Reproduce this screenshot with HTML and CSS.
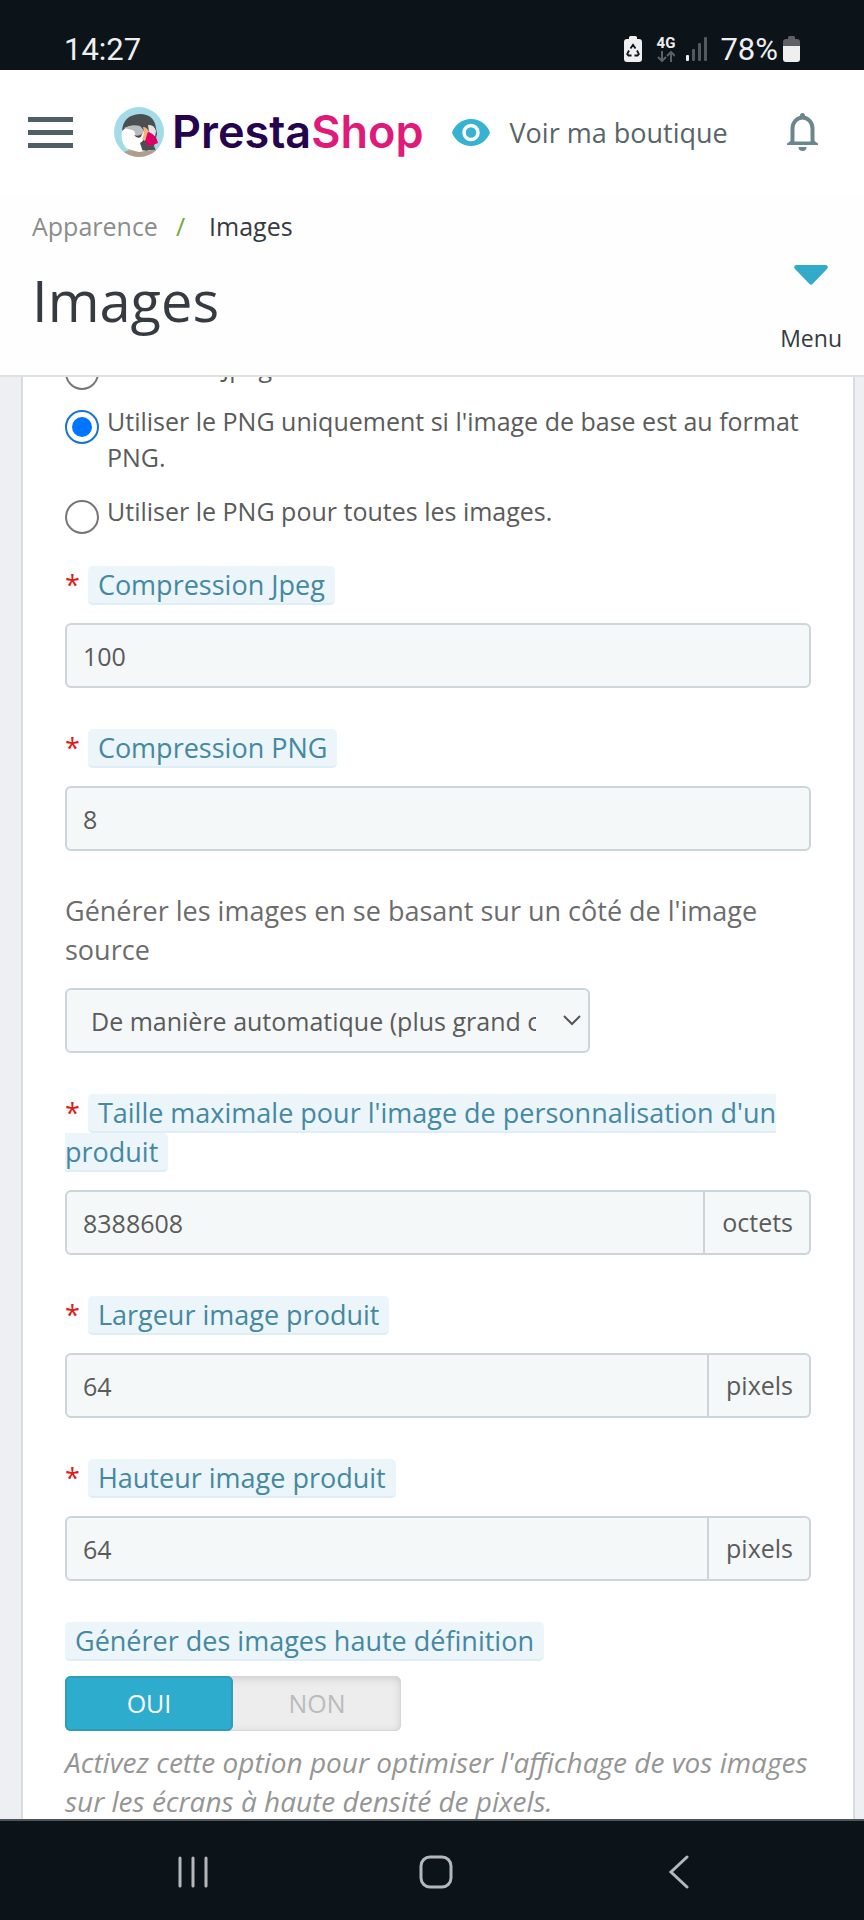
FILE: index.html
```html
<!DOCTYPE html>
<html lang="fr">
<head>
    <meta charset="UTF-8">
    <meta name="viewport" content="width=device-width, initial-scale=1.0">
    <title>Images - PrestaShop</title>
    <link rel="stylesheet" href="styles.css">
</head>
<body>

<div class="status-bar">
    <span>14:27</span>
    <div class="status-icons">
        <svg class="saver-icon" width="18" height="26" viewBox="0 0 18 26">
            <path d="M5 3V1.500Q5 0 6.500 0h5Q13 0 13 1.500V3h2q3 0 3 3v17q0 3-3 3H3q-3 0-3-3V6q0-3 3-3z" fill="#efeff0"/>
            <path d="M6.500 12.500 9 8.800l2.500 3.700M13 14.500l1.800 3.500-1.300 1.500H10.500M7.500 19.500H4.500L3.200 18 5 14.500" fill="none" stroke="#0c141a" stroke-width="1.800"/>
        </svg>
        <div class="network">
            <span>4G</span>
            <svg width="18" height="11" viewBox="0 0 18 11" fill="none" stroke="#5d6166" stroke-width="2">
                <path d="M5 0v10M1 6l4 4 4-4M14 11V1M10 5l4-4 4 4"/>
            </svg>
        </div>
        <svg class="signal-icon" width="23" height="24" viewBox="0 0 23 24">
            <rect x="1" y="18" width="3" height="6" rx="1" fill="#efeff0"/>
            <rect x="7" y="12" width="3" height="12" rx="1" fill="#54595e"/>
            <rect x="13" y="6" width="3" height="18" rx="1" fill="#54595e"/>
            <rect x="19" y="0" width="3" height="24" rx="1" fill="#54595e"/>
        </svg>
        <span>78%</span>
        <svg class="battery-icon" width="17" height="26" viewBox="0 0 17 26">
            <path d="M5 3V1.500Q5 0 6.500 0h4Q12 0 12 1.500V3h2q3 0 3 3v4H0V6q0-3 3-3z" fill="#5d6166"/>
            <path d="M0 10h17v13q0 3-3 3H3q-3 0-3-3z" fill="#efeff0"/>
        </svg>
    </div>
</div>

<header class="header">
    <button type="button" class="icon-btn" aria-label="Navigation">
        <svg width="45" height="31" viewBox="0 0 45 31" fill="#4e6066">
            <path d="M0 0h45v5H0zM0 13h45v5H0zM0 26h45v5H0z"/>
        </svg>
    </button>
    <a href="#" class="logo">
        <svg width="50" height="50" viewBox="0 0 50 50">
            <defs>
                <clipPath id="logo-clip"><circle cx="25" cy="25" r="25"/></clipPath>
            </defs>
            <g clip-path="url(#logo-clip)">
                <rect width="50" height="50" fill="#a4dbe8"/>
                <path d="M8 24Q9 8 26 7q14 0 16 14l1 6-4 16H15z" fill="#4b4f50"/>
                <path d="M8 24q6-6 13-5 9 1 10 9-1 6-5 8 2 6 3 9l-6 1-11-5Q6 34 8 24z" fill="#fff"/>
                <path d="M10 21q8-4 16-2 4 3 3 8-4 3-8 2 1-5-3-6-4-1-8-2z" fill="#b9bdc0"/>
                <path d="M20 28q4 2 8-1l-1 3q-4 2-7-2z" fill="#44484a"/>
                <path d="M34 18q6-1 8 6l-1 6-6-5z" fill="#e2e3e5"/>
                <path d="M29 20q4 0 6 5l-4 9-3-2q3-5 1-12z" fill="#f0b37a"/>
                <path d="M34 25q9 3 10 11-6 3-12 2-1-7 2-13z" fill="#df0067"/>
                <path d="M9 45l8-2 8 2 14-2 4 2-6 8H14z" fill="#b39d88"/>
                <path d="M28 43l3-3 3 4zM38 42l2-3 2 5z" fill="#4b4f50"/>
            </g>
        </svg>
        <span class="logo-text">Presta<span>Shop</span></span>
    </a>
    <a href="#" class="shop-link">
        <svg width="38" height="27" viewBox="0 0 38 27">
            <path d="M19 0C10 0 3 5.500 0 13.500 3 21.500 10 27 19 27s16-5.500 19-13.500C35 5.500 28 0 19 0z" fill="#36b3d0"/>
            <circle cx="19" cy="13.500" r="7" fill="#36b3d0" stroke="#fff" stroke-width="3.500"/>
        </svg>
        Voir ma boutique
    </a>
    <button type="button" class="icon-btn bell" aria-label="Notifications">
        <svg width="31" height="38" viewBox="0 0 31 38">
            <path d="M5.500 30V15.500a10 11 0 0 1 20 0V30" fill="none" stroke="#6c868e" stroke-width="4"/>
            <path d="M13 5V2.500a2.500 2.500 0 0 1 5 0V5zM5 27h21l5 3.500V32H0v-1.500z" fill="#6c868e"/>
            <path d="M7.500 26h16v2.500h-16z" fill="#fff"/>
            <path d="M11.500 34h8a4 4 0 0 1-8 0z" fill="#6c868e"/>
        </svg>
    </button>
</header>

<div class="page-head">
    <div>
        <nav class="breadcrumb">
            <a href="#">Apparence</a>
            <span class="separator">/</span>
            <span>Images</span>
        </nav>
        <h1>Images</h1>
    </div>
    <button type="button" class="menu-btn">
        <svg width="34" height="20" viewBox="0 0 34 20">
            <path d="M2 0h30q3 1 1 4L18.500 19q-1.500 1.500-3 0L1 4Q-1 1 2 0z" fill="#31aacb"/>
        </svg>
        Menu
    </button>
</div>

<main class="content">
    <form class="panel">
        <div class="radio-list">
            <label class="radio">
                <input type="radio" name="image_format" value="jpg">
                <span>Utiliser le Jpeg.</span>
            </label>
            <label class="radio">
                <input type="radio" name="image_format" value="png" checked>
                <span>Utiliser le PNG uniquement si l'image de base est au format PNG.</span>
            </label>
            <label class="radio">
                <input type="radio" name="image_format" value="png_all">
                <span>Utiliser le PNG pour toutes les images.</span>
            </label>
        </div>

        <div class="form-group">
            <label for="jpeg-quality" class="required"><span class="hint">Compression Jpeg</span></label>
            <input type="text" id="jpeg-quality" class="field" value="100">
        </div>

        <div class="form-group">
            <label for="png-quality" class="required"><span class="hint">Compression PNG</span></label>
            <input type="text" id="png-quality" class="field" value="8">
        </div>

        <div class="form-group">
            <label for="generation">Générer les images en se basant sur un côté de l'image source</label>
            <div class="select-wrap">
                <select id="generation" class="field">
                    <option>De manière automatique (plus grand côté)</option>
                    <option>Largeur</option>
                    <option>Hauteur</option>
                </select>
                <svg class="chevron" width="18" height="11" viewBox="0 0 18 11">
                    <path d="M1 1l8 8 8-8" fill="none" stroke="#555" stroke-width="2"/>
                </svg>
            </div>
        </div>

        <div class="form-group">
            <label for="max-size" class="required"><span class="hint">Taille maximale pour l'image de personnalisation d'un produit</span></label>
            <div class="input-group">
                <input type="text" id="max-size" class="field" value="8388608">
                <span class="addon">octets</span>
            </div>
        </div>

        <div class="form-group">
            <label for="picture-width" class="required"><span class="hint">Largeur image produit</span></label>
            <div class="input-group">
                <input type="text" id="picture-width" class="field" value="64">
                <span class="addon">pixels</span>
            </div>
        </div>

        <div class="form-group">
            <label for="picture-height" class="required"><span class="hint">Hauteur image produit</span></label>
            <div class="input-group">
                <input type="text" id="picture-height" class="field" value="64">
                <span class="addon">pixels</span>
            </div>
        </div>

        <fieldset class="switch-group">
            <legend><span class="hint">Générer des images haute définition</span></legend>
            <div class="switch">
                <input type="radio" name="high_dpi" id="high-dpi-on" checked>
                <label for="high-dpi-on">OUI</label>
                <input type="radio" name="high_dpi" id="high-dpi-off">
                <label for="high-dpi-off">NON</label>
            </div>
            <p class="help">Activez cette option pour optimiser l'affichage de vos images sur les écrans à haute densité de pixels.</p>
        </fieldset>
    </form>
</main>

<nav class="nav-bar">
    <button type="button" class="icon-btn" aria-label="Applications récentes">
        <svg width="34" height="34" viewBox="0 0 34 34" stroke="#b4b8bb" stroke-width="3" stroke-linecap="round">
            <path d="M4 3v28M17 3v28M30 3v28"/>
        </svg>
    </button>
    <button type="button" class="icon-btn" aria-label="Accueil">
        <svg width="34" height="34" viewBox="0 0 34 34">
            <rect x="2" y="2" width="30" height="30" rx="9" fill="none" stroke="#b4b8bb" stroke-width="3"/>
        </svg>
    </button>
    <button type="button" class="icon-btn" aria-label="Retour">
        <svg width="34" height="34" viewBox="0 0 34 34">
            <path d="M25 2L9 17l16 15" fill="none" stroke="#b4b8bb" stroke-width="3" stroke-linecap="round"/>
        </svg>
    </button>
</nav>

</body>
</html>
```
FILE: styles.css
```css
* {
    box-sizing: border-box;
}

body {
    margin: 0;
    height: 100vh;
    display: flex;
    flex-direction: column;
    font-family: "Open Sans", "Noto Sans", sans-serif;
    font-size: 25px;
    color: #5b5b5b;
    background-color: #eeeff2;
}

a {
    color: inherit;
    text-decoration: none;
}

svg {
    display: block;
    flex: none;
}

button {
    font: inherit;
    color: inherit;
    background: none;
    border: none;
    padding: 0;
    cursor: pointer;
}

/* Phone status bar */
.status-bar {
    flex: none;
    height: 70px;
    padding: 30px 64px 2px;
    display: flex;
    justify-content: space-between;
    align-items: center;
    background-color: #0c141a;
    color: #efeff0;
    font-family: Roboto, sans-serif;
    font-size: 31px;
}

.status-icons {
    display: flex;
    align-items: center;
}

.network {
    display: flex;
    flex-direction: column;
    align-items: center;
    margin: 0 10px 0 15px;
    font-size: 15px;
    font-weight: bold;
    line-height: 15px;
}

.signal-icon {
    margin-right: 12px;
}

.battery-icon {
    margin-left: 5px;
}

/* Header */
.header {
    flex: none;
    height: 124px;
    padding: 0 46px 0 28px;
    display: flex;
    align-items: center;
    background-color: #ffffff;
}

.logo {
    display: flex;
    align-items: center;
    gap: 8px;
    margin-left: 41px;
}

.logo-text {
    font-family: Inter, Lato, sans-serif;
    font-size: 45px;
    font-weight: 600;
    line-height: 50px;
    color: #25034d;
}

.logo-text span {
    color: #df1a7b;
}

.shop-link {
    display: flex;
    align-items: center;
    gap: 20px;
    margin-left: 28px;
    font-size: 27px;
    color: #576469;
}

.bell {
    margin-left: auto;
}

/* Page title */
.page-head {
    flex: none;
    padding: 14px 22px 21px 32px;
    display: flex;
    justify-content: space-between;
    align-items: flex-end;
    background-color: #fefefe;
    border-bottom: 2px solid #dfe1e3;
    color: #363a41;
}

.breadcrumb {
    display: flex;
    line-height: 36px;
}

.breadcrumb a {
    color: #8c8c8c;
}

.separator {
    margin: 0 24px 0 18px;
    color: #72a83c;
}

h1 {
    margin: 18px 0 16px;
    font-size: 56px;
    font-weight: normal;
    line-height: 76px;
}

.menu-btn {
    display: flex;
    flex-direction: column;
    align-items: center;
    gap: 37px;
    font-size: 23px;
    line-height: 32px;
}

/* Form */
.content {
    flex: 1;
    min-height: 0;
    overflow: hidden;
}

.panel {
    margin: -28px 9px 0 21px;
    padding: 0 42px 40px;
    background-color: #ffffff;
    border: 2px solid #d7dce0;
    border-top: none;
}

.radio-list {
    display: flex;
    flex-direction: column;
    gap: 18px;
    margin-bottom: 36px;
}

.radio {
    display: flex;
    align-items: flex-start;
    gap: 8px;
    line-height: 36px;
}

/* The negative margin keeps a one-line row as tall as its text */
.radio input {
    appearance: none;
    flex: none;
    width: 34px;
    height: 34px;
    margin: 7px 0 -5px;
    border: 2px solid #767676;
    border-radius: 50%;
}

.radio input:checked {
    border-color: #1a73d4;
    background-color: #0075ff;
    background-clip: content-box;
    padding: 5px;
}

.form-group {
    display: flex;
    flex-direction: column;
    gap: 19px;
    margin-bottom: 40px;
}

.form-group label,
.switch-group legend {
    font-size: 27px;
    line-height: 39px;
    color: #6c6c6c;
}

.required::before {
    content: "*";
    margin-right: 8px;
    color: #dd1a1a;
}

.hint {
    padding: 0 10px;
    background-color: #ebf5fa;
    border-bottom: 2px solid #dfeef5;
    border-radius: 5px;
    color: #4588a0;
}

.field {
    width: 100%;
    height: 65px;
    padding: 0 16px;
    border: 2px solid #cbd5da;
    border-radius: 6px;
    background-color: #f4f8f9;
    color: #5b5b5b;
    font-family: inherit;
    font-size: 25px;
}

.select-wrap {
    position: relative;
    width: 525px;
    max-width: 100%;
}

select.field {
    display: block;
    appearance: none;
    padding: 0 52px 0 24px;
}

.chevron {
    position: absolute;
    top: 27px;
    right: 9px;
    pointer-events: none;
}

.input-group {
    display: flex;
}

.input-group .field {
    flex: 1;
    min-width: 0;
    border-radius: 6px 0 0 6px;
}

.addon {
    padding: 0 16px 0 17px;
    border: 2px solid #cbd5da;
    border-left: none;
    border-radius: 0 6px 6px 0;
    background-color: #f4f8f9;
    line-height: 61px;
}

/* Yes / no switch */
.switch-group {
    margin: 0;
    padding: 0;
    border: none;
}

.switch-group legend {
    padding: 0;
}

.switch {
    position: relative;
    display: flex;
    width: 336px;
    margin-top: 16px;
    border-radius: 6px;
    background-color: #ededed;
    box-shadow: inset 0 0 0 1px #d6d6d6, inset 0 2px 8px #c8c8c8;
    line-height: 55px;
    text-align: center;
}

.switch input {
    position: absolute;
    opacity: 0;
}

.switch label {
    flex: 1;
    color: #bbbbbb;
}

.switch input:checked + label {
    border-radius: 6px;
    background-color: #2eacce;
    box-shadow: inset 0 0 0 2px #2e9dba;
    color: #ffffff;
}

.help {
    margin: 12px 0 0;
    font-size: 28px;
    font-style: italic;
    line-height: 39px;
    color: #959595;
}

/* Phone navigation bar */
.nav-bar {
    flex: none;
    height: 101px;
    padding: 3px 168px 0 176px;
    display: flex;
    justify-content: space-between;
    align-items: center;
    background-color: #0c141a;
    border-top: 2px solid #4d545a;
}
```
